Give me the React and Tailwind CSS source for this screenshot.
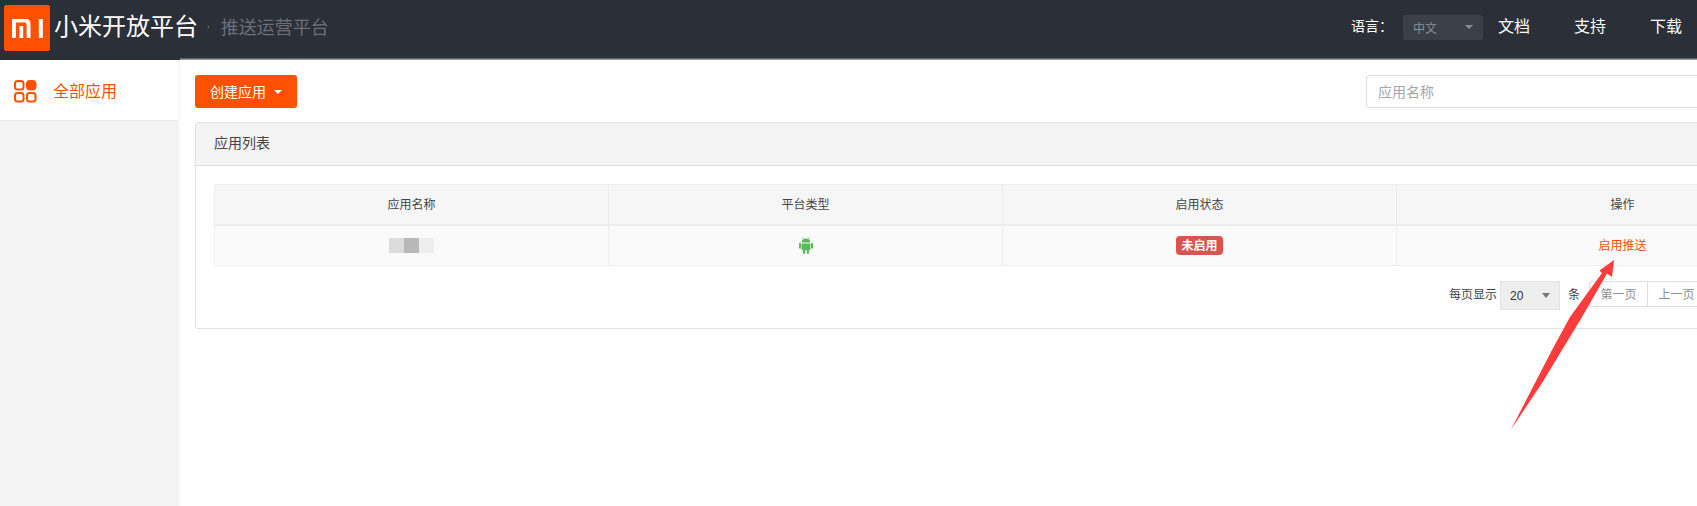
import React from 'react';

const font = { fontFamily: '"Liberation Sans", "Noto Sans CJK SC", sans-serif' };

function AppsIcon() {
  return (
    <svg width="23" height="23" viewBox="0 0 23 23" fill="none" stroke="#ff5000" strokeWidth="2">
      <rect x="1" y="1" width="8.5" height="8.5" rx="2.5" />
      <rect x="13" y="1" width="8.5" height="8.5" rx="3" fill="#ff5000" />
      <rect x="1" y="13" width="8.5" height="8.5" rx="2.5" />
      <rect x="13" y="13" width="8.5" height="8.5" rx="2.5" />
    </svg>
  );
}

function AndroidIcon() {
  return (
    <svg width="14" height="18" viewBox="0 0 14 18" fill="#5cb85c">
      <path d="M2.6 6.6 C2.7 4.2 4.4 2.6 7 2.6 C9.6 2.6 11.3 4.2 11.4 6.6 Z" />
      <path d="M4.4 2.9 L3.7 1 M9.6 2.9 L10.3 1" stroke="#5cb85c" strokeWidth="0.6" />
      <path d="M2.6 7.4 H11.4 V13.6 Q11.4 14.4 10.6 14.4 H3.4 Q2.6 14.4 2.6 13.6 Z" />
      <rect x="0" y="6.8" width="2" height="6" rx="1" />
      <rect x="12" y="6.8" width="2" height="6" rx="1" />
      <rect x="4" y="14" width="2.1" height="4" rx="1" />
      <rect x="7.9" y="14" width="2.1" height="4" rx="1" />
    </svg>
  );
}

function Header() {
  return (
    <div className="flex h-[60px] items-start justify-between bg-[#2b2f38] pr-[15px]">
      <div className="flex items-center">
        <div className="ml-[4px] mt-[5px] flex h-[46px] w-[46px] items-center justify-center rounded-[2px] bg-[#ff5000]">
          <svg width="31" height="19" viewBox="0 0 31 19" fill="#fff">
            <path d="M0 0 H14 Q18.5 0 18.5 4.5 V19 H14.6 V5.2 Q14.6 3.6 13 3.6 H3.9 V19 H0 Z" />
            <rect x="7.4" y="7" width="3.8" height="12" />
            <rect x="26.8" y="0" width="4" height="19" />
          </svg>
        </div>
        <span className="ml-[4px] mt-[3px] text-[24px] leading-[46px] text-white">小米开放平台</span>
        <span className="ml-[8px] text-[14px] leading-[46px] text-[#777]">·</span>
        <span className="ml-[10px] mt-[5px] text-[18px] leading-[46px] text-[#6e7076]">推送运营平台</span>
      </div>
      <div className="flex h-[54px] items-center">
        <span className="pb-[2px] text-[14px] text-white">语言：</span>
        <div className="ml-[10px] flex h-[25px] w-[80px] items-center justify-between rounded-[3px] bg-[#3a3f48] pl-[10px] pr-[10px]">
          <span className="pt-[4px] text-[12px] text-[#8b8e94]">中文</span>
          <span className="h-0 w-0 border-x-[4px] border-t-[4px] border-x-transparent border-t-[#8b8e94]" />
        </div>
        <div className="ml-[15px] flex gap-[44px] text-[16px] text-white">
          <span>文档</span>
          <span>支持</span>
          <span>下载</span>
        </div>
      </div>
    </div>
  );
}

function Sidebar() {
  return (
    <div className="w-[180px] shrink-0 border-r-2 border-[#f7f7f7] bg-[#f3f3f3]">
      <div className="flex h-[61px] items-center gap-[16px] border-b border-[#e6e6e6] bg-white pl-[14px] pt-[3px] text-[16px] text-[#ff5000]">
        <AppsIcon />
        <span>全部应用</span>
      </div>
    </div>
  );
}

function AppTable() {
  const th = 'h-[40px] border border-[#eeeeee] border-b-2 bg-[#f6f6f6] pt-[2px] text-center text-[12px] font-normal text-[#444]';
  const td = 'h-[41px] border border-[#eeeeee] bg-[#fafafa] text-center text-[12px]';
  return (
    <table className="w-[1634px] table-fixed border-collapse">
      <colgroup>
        <col className="w-[394px]" />
        <col className="w-[394px]" />
        <col className="w-[394px]" />
        <col className="w-[452px]" />
      </colgroup>
      <thead>
        <tr>
          <th className={th}>应用名称</th>
          <th className={th}>平台类型</th>
          <th className={th}>启用状态</th>
          <th className={th}>操作</th>
        </tr>
      </thead>
      <tbody>
        <tr>
          <td className={td}>
            <div className="flex justify-center">
              <span className="h-[15px] w-[15px] bg-[#dcdcdc]" />
              <span className="h-[15px] w-[15px] bg-[#b8b8b8]" />
              <span className="h-[15px] w-[15px] bg-[#eeeeee]" />
            </div>
          </td>
          <td className={td}>
            <div className="flex justify-center">
              <AndroidIcon />
            </div>
          </td>
          <td className={td}>
            <span className="inline-block h-[19px] rounded-[4px] bg-[#d9534f] px-[5px] text-[12px] font-bold leading-[20px] text-white">未启用</span>
          </td>
          <td className={`${td} pt-[2px] text-[#ff5000]`}>启用推送</td>
        </tr>
      </tbody>
    </table>
  );
}

function Pager() {
  const btn = 'flex h-[26px] items-center justify-center border border-[#dddddd] bg-white pt-[2px] text-[12px] text-[#8a8f94] -ml-px';
  return (
    <div className="mt-[15px] flex w-[1634px] items-start justify-end text-[12px] text-[#444]">
      <span className="leading-[29px]">每页显示</span>
      <div className="ml-[3px] flex h-[29px] w-[60px] items-center justify-between border border-[#e2e2e2] bg-[#eeeeee] pl-[9px] pr-[9px] text-[#333]">
        <span>20</span>
        <span className="h-0 w-0 border-x-[4px] border-t-[5px] border-x-transparent border-t-[#777]" />
      </div>
      <span className="ml-[8px] mr-[10px] leading-[29px]">条</span>
      <div className={`${btn} w-[59px] rounded-l-[3px]`}>第一页</div>
      <div className={`${btn} w-[59px]`}>上一页</div>
      <div className={`${btn} w-[27px]`}>1</div>
      <div className={`${btn} w-[59px]`}>下一页</div>
      <div className={`${btn} w-[59px] rounded-r-[3px]`}>末页</div>
    </div>
  );
}

export default function App() {
  return (
    <div className="relative flex h-[506px] w-[1697px] flex-col overflow-hidden bg-white" style={font}>
      <Header />
      <div className="flex flex-1">
        <Sidebar />
        <div className="-mt-[2px] w-[1700px] shrink-0">
          <div className="h-[2px] bg-gradient-to-b from-[#4b4e55] to-[#b5b5b5]" />
          <div className="pl-[15px] pt-[15px]">
            <div className="flex w-[1672px] items-center justify-between">
              <button className="flex h-[33px] w-[102px] items-center justify-center gap-[8px] rounded-[3px] bg-[#ff5000] pt-[1px] text-[14px] text-white">
                创建应用
                <span className="h-0 w-0 border-x-[4px] border-t-[4px] border-x-transparent border-t-white" />
              </button>
              <input
                placeholder="应用名称"
                className="h-[33px] w-[501px] rounded-[3px] border border-[#dddddd] px-[11px] text-[14px] placeholder:text-[#a5a5a5]"
              />
            </div>
            <div className="mt-[14px] h-[207px] w-[1672px] rounded-[3px] border border-[#e2e2e2]">
              <div className="flex h-[43px] items-center border-b border-[#dddddd] bg-[#f4f4f4] pb-[2px] pl-[18px] text-[14px] text-[#444]">应用列表</div>
              <div className="pl-[18px] pt-[18px]">
                <AppTable />
                <Pager />
              </div>
            </div>
          </div>
        </div>
      </div>
      {/* annotation arrow drawn on top of the screenshot */}
      <svg className="absolute left-0 top-0" width="1697" height="506" fill="#ff3b3b">
        <path d="M1614 260 L1612 277 L1607 273.5 L1582 317 L1562 350 L1542 383 L1511 429.5 L1535 383 L1552 350 L1570 317 L1602 273 L1599.5 270.5 Z" />
      </svg>
    </div>
  );
}
